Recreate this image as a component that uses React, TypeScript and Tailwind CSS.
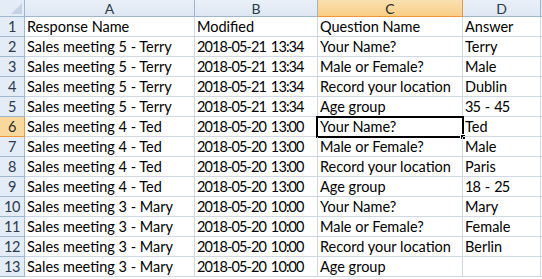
import React from "react";

const rows: string[][] = [
  ["Response Name", "Modified", "Question Name", "Answer"],
  ["Sales meeting 5 - Terry", "2018-05-21 13:34", "Your Name?", "Terry"],
  ["Sales meeting 5 - Terry", "2018-05-21 13:34", "Male or Female?", "Male"],
  ["Sales meeting 5 - Terry", "2018-05-21 13:34", "Record your location", "Dublin"],
  ["Sales meeting 5 - Terry", "2018-05-21 13:34", "Age group", "35 - 45"],
  ["Sales meeting 4 - Ted", "2018-05-20 13:00", "Your Name?", "Ted"],
  ["Sales meeting 4 - Ted", "2018-05-20 13:00", "Male or Female?", "Male"],
  ["Sales meeting 4 - Ted", "2018-05-20 13:00", "Record your location", "Paris"],
  ["Sales meeting 4 - Ted", "2018-05-20 13:00", "Age group", "18 - 25"],
  ["Sales meeting 3 - Mary", "2018-05-20 10:00", "Your Name?", "Mary"],
  ["Sales meeting 3 - Mary", "2018-05-20 10:00", "Male or Female?", "Female"],
  ["Sales meeting 3 - Mary", "2018-05-20 10:00", "Record your location", "Berlin"],
  ["Sales meeting 3 - Mary", "2018-05-20 10:00", "Age group", ""],
];

const cols = ["A", "B", "C", "D"];

export default function App() {
  return (
    <div
      className="w-[542px] h-[279px] overflow-hidden bg-white text-black"
      style={{ fontFamily: "Lato, 'Open Sans', sans-serif" }}
    >
      <div className="grid grid-cols-[25px_170px_123px_145px_78px_1px] grid-rows-[17px_repeat(13,20px)]">
        {/* corner */}
        <div className="relative border-r border-b border-[#9eb6ce] bg-[#e4ecf7]">
          <svg className="absolute right-[2px] bottom-[2px]" width="11" height="11" viewBox="0 0 11 11">
            <polygon points="11,0 11,11 0,11" fill="#c5d2e3" />
          </svg>
        </div>
        {cols.map((c, i) => (
          <div
            key={c}
            className={
              i === 2
                ? "flex items-center justify-center border-r border-b border-r-[#f29536] border-b-[#f29536] bg-gradient-to-b from-[#fae0b0] to-[#f8cf85] text-[14px] text-[#2b2b2b]"
                : "flex items-center justify-center border-r border-b border-[#9eb6ce] bg-gradient-to-b from-[#eaf0f8] to-[#dee7f3] text-[14px] text-[#2b3a4d]"
            }
          >
            {c}
          </div>
        ))}
        <div className="border-b border-[#9eb6ce] bg-[#e4ecf7]" />
        {rows.map((r, ri) => (
          <React.Fragment key={ri}>
            <div
              className={
                ri === 5
                  ? "flex items-end justify-center border-r border-b border-[#f29536] bg-[#f9d89c] text-[14.5px] leading-[18px] tracking-[-0.5px] text-[#2b2b2b]"
                  : "flex items-end justify-center border-r border-b border-[#9eb6ce] bg-[#e4ecf7] text-[14.5px] leading-[18px] tracking-[-0.5px] text-[#2b3a4d]"
              }
            >
              {ri + 1}
            </div>
            {r.map((v, ci) => (
              <div
                key={ci}
                className={
                  (ri > 0 && ci === 1) || (ci === 3 && /\d/.test(v))
                    ? "relative flex items-end whitespace-pre border-r border-b border-[#d0d7e5] pl-[2px] text-[14.5px] leading-[18px] tracking-[-0.9px] [word-spacing:2px]"
                    : "relative flex items-end whitespace-pre border-r border-b border-[#d0d7e5] pl-[2px] text-[14.5px] leading-[18px]"
                }
              >
                {v}
                {ri === 5 && ci === 2 && (
                  <>
                    <div className="absolute left-[-2px] top-[-1px] right-[-2px] bottom-[-2px] border-2 border-black" />
                    <div className="absolute right-[-4px] bottom-[-4px] w-[6px] h-[6px] bg-black border border-white" />
                  </>
                )}
              </div>
            ))}
            <div className="border-b border-[#d0d7e5]" />
          </React.Fragment>
        ))}
      </div>
    </div>
  );
}
